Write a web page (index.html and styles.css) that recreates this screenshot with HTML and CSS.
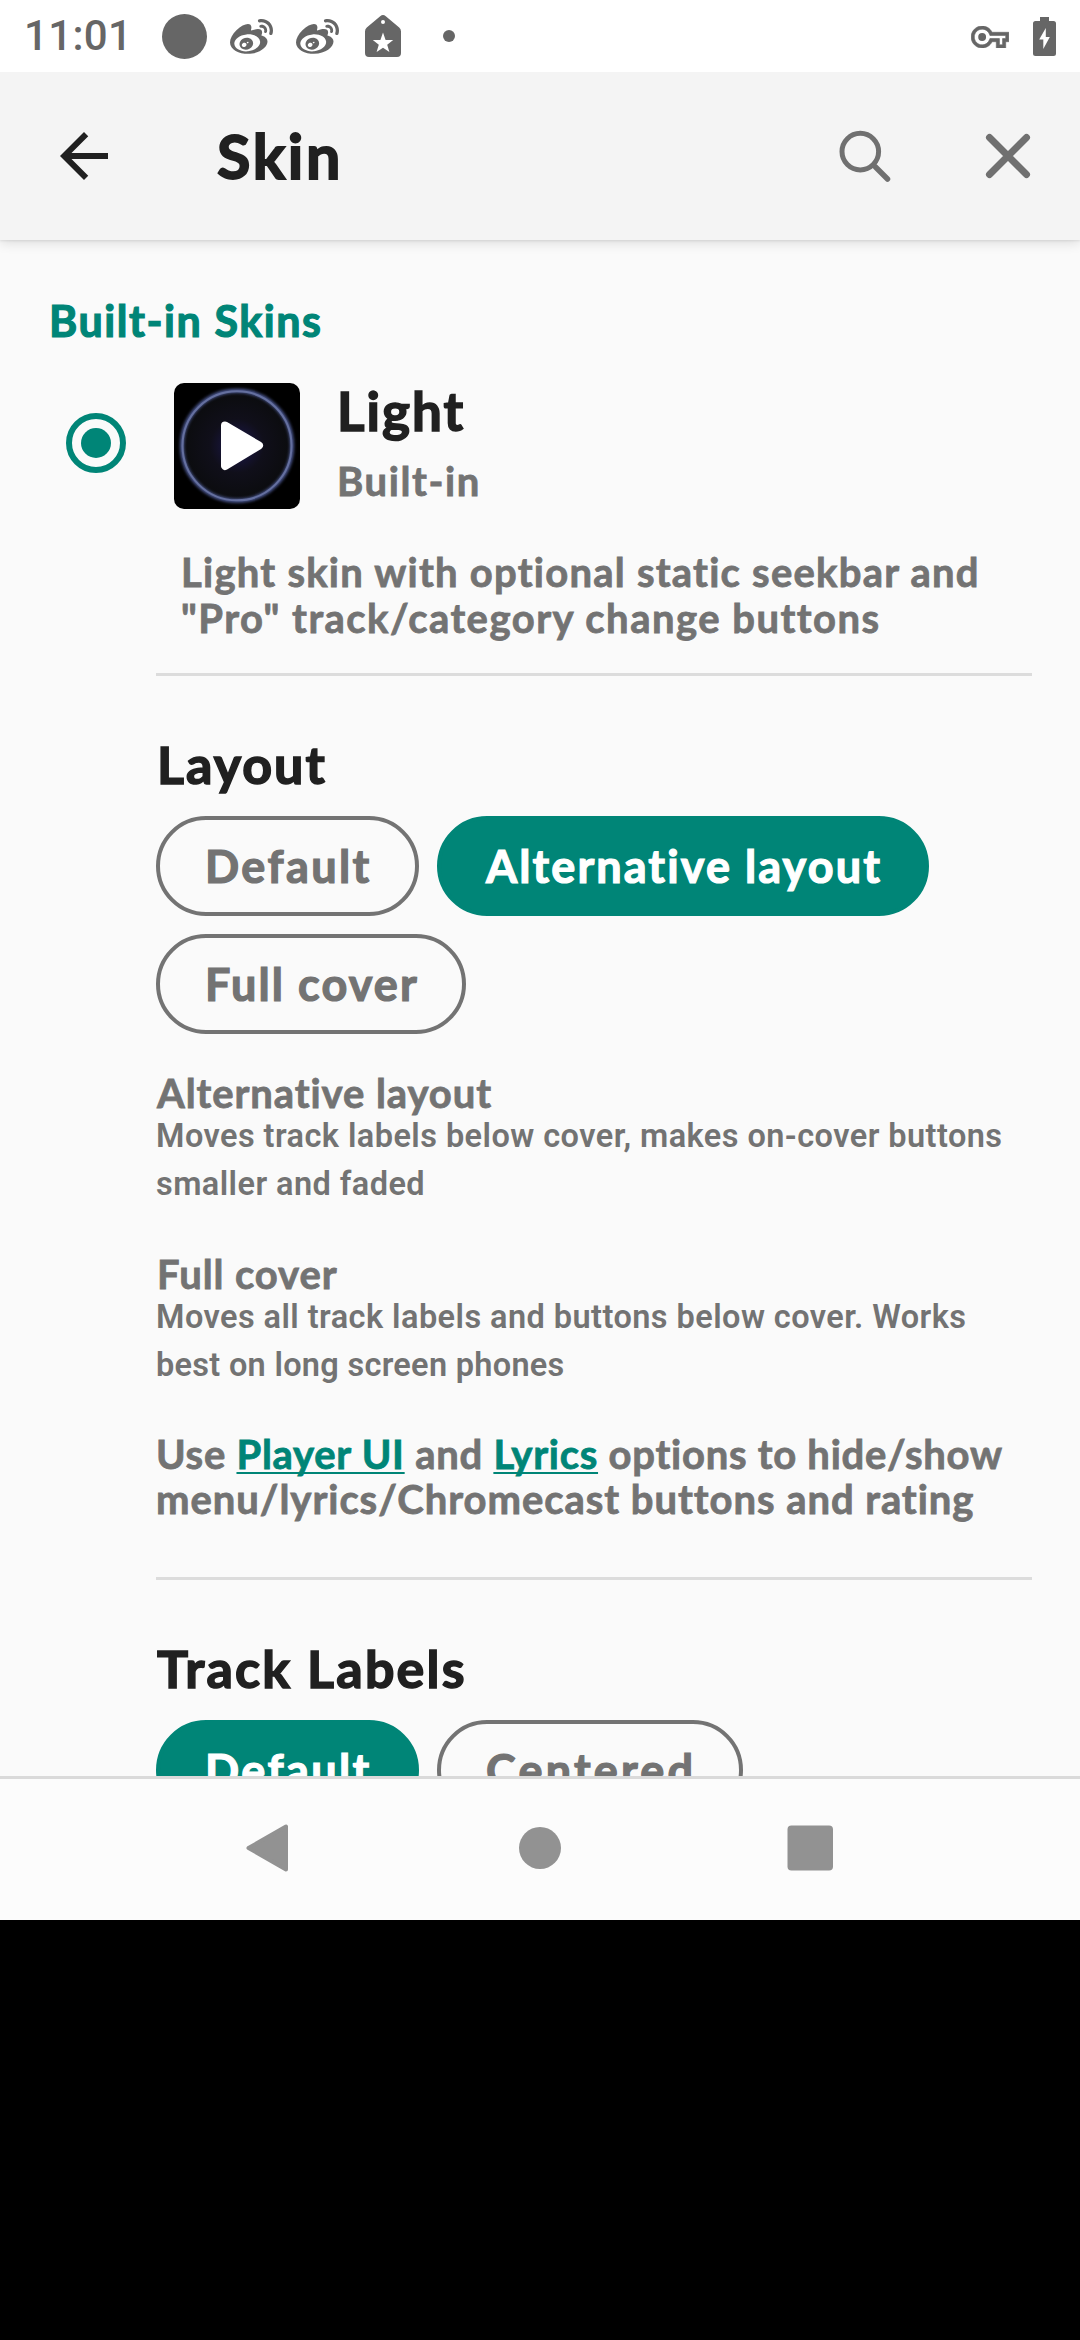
FILE: index.html
```
<!DOCTYPE html>
<html lang="en">
<head>
<meta charset="utf-8">
<title>Skin</title>
<link rel="stylesheet" href="styles.css">
</head>
<body>
<div class="status">
  <span class="clock">11:01</span>
  <svg class="disc" width="45" height="45" viewBox="0 0 45 45"><circle cx="22.5" cy="22.5" r="22.5"/></svg>
  <svg class="weibo" width="43" height="35" viewBox="0 33 512 414"><path d="M407 177.6c7.6-24-13.4-46.8-37.4-41.7-22 4.8-28.8-28.1-7.1-32.8 50.1-10.9 92.3 37.1 76.5 84.8-6.8 21.2-38.8 10.8-32-10.3zM214.8 446.7C108.5 446.7 0 395.3 0 310.4c0-44.3 28-95.4 76.3-143.7C176 67 279.5 65.8 249.9 161c-4 13.1 12.3 5.7 12.3 6 79.5-33.6 140.5-16.8 114 51.4-3.7 9.4 1.1 10.9 8.3 13.1 135.7 42.3 34.8 215.2-169.7 215.2zm143.7-146.3c-5.4-55.7-78.5-94-163.4-85.7-84.8 8.6-148.8 60.3-143.4 116s78.5 94 163.4 85.7c84.8-8.6 148.8-60.3 143.4-116zM347.9 35.1c-25.9 5.6-16.8 43.7 8.3 38.3 72.3-15.2 134.8 52.8 111.7 124-7.4 24.2 29.1 37 37.4 12 31.9-99.8-55.1-195.9-157.4-174.3zm-78.5 311c-17.1 38.8-66.8 60-109.1 46.3-40.8-13.1-58-53.4-40.3-89.7 17.7-35.4 63.1-55.4 103.4-45.1 42 10.8 63.1 50.2 46 88.5zm-86.3-30c-12.9-5.4-30 .3-38 12.9-8.3 12.9-4.3 28 8.6 34 13.1 6 30.8.3 39.1-12.9 8-13.1 3.7-28.3-9.7-34zm32.6-13.4c-5.1-1.7-11.4.6-14.3 5.4-2.9 5.1-1.4 10.6 3.7 12.9 5.1 2 11.7-.3 14.6-5.4 2.8-5.2 1.1-10.9-4-12.9z"/></svg>
  <svg class="weibo" width="43" height="35" viewBox="0 33 512 414"><path d="M407 177.6c7.6-24-13.4-46.8-37.4-41.7-22 4.8-28.8-28.1-7.1-32.8 50.1-10.9 92.3 37.1 76.5 84.8-6.8 21.2-38.8 10.8-32-10.3zM214.8 446.7C108.5 446.7 0 395.3 0 310.4c0-44.3 28-95.4 76.3-143.7C176 67 279.5 65.8 249.9 161c-4 13.1 12.3 5.7 12.3 6 79.5-33.6 140.5-16.8 114 51.4-3.7 9.4 1.1 10.9 8.3 13.1 135.7 42.3 34.8 215.2-169.7 215.2zm143.7-146.3c-5.4-55.7-78.5-94-163.4-85.7-84.8 8.6-148.8 60.3-143.4 116s78.5 94 163.4 85.7c84.8-8.6 148.8-60.3 143.4-116zM347.9 35.1c-25.9 5.6-16.8 43.7 8.3 38.3 72.3-15.2 134.8 52.8 111.7 124-7.4 24.2 29.1 37 37.4 12 31.9-99.8-55.1-195.9-157.4-174.3zm-78.5 311c-17.1 38.8-66.8 60-109.1 46.3-40.8-13.1-58-53.4-40.3-89.7 17.7-35.4 63.1-55.4 103.4-45.1 42 10.8 63.1 50.2 46 88.5zm-86.3-30c-12.9-5.4-30 .3-38 12.9-8.3 12.9-4.3 28 8.6 34 13.1 6 30.8.3 39.1-12.9 8-13.1 3.7-28.3-9.7-34zm32.6-13.4c-5.1-1.7-11.4.6-14.3 5.4-2.9 5.1-1.4 10.6 3.7 12.9 5.1 2 11.7-.3 14.6-5.4 2.8-5.2 1.1-10.9-4-12.9z"/></svg>
  <svg class="tag" width="36" height="42" viewBox="0 0 36 42"><path fill-rule="evenodd" d="M15.2 1.2Q18-1 20.8 1.2L34.2 12.6Q36 14.2 36 16.5V38Q36 42 32 42H4Q0 42 0 38V16.5Q0 14.2 1.8 12.6ZM18 5a2 2 0 1 0 0 4a2 2 0 1 0 0-4ZM18 17.5L15.4 25H7.8L13.8 29.8L11.6 37L18 32.8L24.4 37L22.2 29.8L28.2 25H20.6Z"/></svg>
  <svg class="more" width="12" height="12" viewBox="0 0 12 12"><circle cx="6" cy="6" r="6"/></svg>
  <svg class="key" width="38" height="22" viewBox="0 5 24 14"><path d="M22 19h-6v-4h-2.68c-1.14 2.42-3.6 4-6.32 4-3.86 0-7-3.14-7-7s3.14-7 7-7c2.72 0 5.17 1.58 6.32 4H24v6h-2v4zm-4-2h2v-4h2v-2H11.94l-.23-.67C11.01 8.34 9.11 7 7 7c-2.76 0-5 2.24-5 5s2.24 5 5 5c2.11 0 4.01-1.34 4.71-3.33l.23-.67H18v4z" stroke-width=".4"/><circle cx="7" cy="12" r="2"/></svg>
  <svg class="battery" width="23" height="39" viewBox="0 0 23 39"><path fill-rule="evenodd" d="M7 0h9v4h4.500q2.500 0 2.500 2.500V36.500q0 2.500-2.500 2.500H2.500Q0 39 0 36.500V6.500Q0 4 2.500 4H7ZM12.800 11L6.200 22.500H10.300V32L16.800 20H12.800Z"/></svg>
</div>

<header class="bar">
  <svg class="back" width="48" height="48" viewBox="4 4 16 16"><path d="M20 11H7.830l5.590-5.590L12 4l-8 8 8 8 1.410-1.410L7.830 13H20v-2z"/></svg>
  <h1 class="bar-title">Skin</h1>
  <svg class="search" width="54" height="54" viewBox="0 0 54 54"><circle cx="22.300" cy="22.600" r="18.300" stroke-width="5"/><path d="M37.500 38L49.500 50" stroke-width="5.500"/><path d="M36 36.500L37.500 38" stroke-width="3"/></svg>
  <svg class="close" width="48" height="48" viewBox="0 0 48 48"><path d="M5.500 5.500L42.500 42.500M42.500 5.500L5.500 42.500" stroke-width="7"/></svg>
</header>

<main class="content">
  <h2 class="group">Built-in Skins</h2>
  <div class="skin">
    <svg class="radio" width="60" height="60" viewBox="0 0 60 60"><circle cx="30" cy="30" r="27" fill="none" stroke="#008577" stroke-width="6"/><circle cx="30" cy="30" r="15" fill="#008577"/></svg>
    <svg class="cover" width="126" height="126" viewBox="0 0 126 126">
      <defs>
        <radialGradient id="glow"><stop offset="0" stop-color="#1c1850"/><stop offset=".5" stop-color="#100f1a"/><stop offset="1" stop-color="#0b0c0e"/></radialGradient>
        <filter id="soft" x="-20%" y="-20%" width="140%" height="140%"><feGaussianBlur stdDeviation="1.600"/></filter>
      </defs>
      <rect width="126" height="126" rx="10"/>
      <circle cx="63" cy="62.800" r="54" fill="url(#glow)"/>
      <circle cx="63" cy="62.800" r="55" fill="none" stroke="#4d5a94" stroke-width="4" filter="url(#soft)"/>
      <circle cx="63" cy="62.800" r="54.500" fill="none" stroke="#65709f" stroke-width="2"/>
      <path d="M51 42.500L85 62.500L51 83Z" fill="#fff" stroke="#fff" stroke-width="8" stroke-linejoin="round"/>
    </svg>
    <div class="skin-text">
      <div class="skin-name">Light</div>
      <div class="skin-kind">Built-in</div>
    </div>
  </div>
  <p class="about">Light skin with optional static seekbar and<br><span class="wider">"Pro" track/category change buttons</span></p>

  <section class="options">
    <h3 class="option-title">Layout</h3>
    <div class="pills">
      <span class="pill w-default">Default</span>
      <span class="pill w-alt on">Alternative layout</span>
      <span class="pill w-full">Full cover</span>
    </div>
    <h4 class="note-title">Alternative layout</h4>
    <p class="note">Moves track labels below cover, makes on-cover buttons<br>smaller and faded</p>
    <h4 class="note-title next">Full cover</h4>
    <p class="note">Moves all track labels and buttons below cover. Works<br><span class="tight">best on long screen phones</span></p>
    <p class="hint">Use <a class="link">Player UI</a> and <a class="link">Lyrics</a> options to hide/show<br><span class="hint-end">menu/lyrics/Chromecast buttons and rating</span></p>
  </section>

  <section class="options">
    <h3 class="option-title labels">Track Labels</h3>
    <div class="pills">
      <span class="pill w-default on">Default</span>
      <span class="pill w-centered">Centered</span>
    </div>
  </section>
</main>

<nav class="nav">
  <svg width="48" height="48" viewBox="0 0 48 48"><path d="M2.500 24L40 2.500V45.500Z" stroke="#929292" stroke-width="4" stroke-linejoin="round"/></svg>
  <svg width="48" height="48" viewBox="0 0 48 48"><circle cx="24" cy="24" r="21"/></svg>
  <svg width="48" height="48" viewBox="0 0 48 48"><rect x="1.500" y="1.500" width="45.500" height="45" rx="4"/></svg>
</nav>
</body>
</html>
```
FILE: styles.css
```
* { box-sizing: border-box; }
body {
  margin: 0;
  width: 1080px;
  height: 2340px;
  overflow: hidden;
  background: #000;
  color: #737373;
  font-family: Lato, "Liberation Sans", sans-serif;
  font-weight: 700;
  -webkit-text-stroke: .8px currentColor;
}
h1, h2, h3, h4, p { margin: 0; font-weight: 700; }
svg { display: block; flex: none; }

.status {
  display: flex;
  align-items: center;
  position: relative;
  z-index: 2;
  height: 72px;
  padding: 0 24px;
  background: #fff;
  fill: #666;
}
.clock {
  width: 138px;
  font: 500 42px/74px Roboto, sans-serif;
  letter-spacing: .35px;
  color: #666;
  -webkit-text-stroke: 0;
}
.weibo { margin-left: 22.500px; }
.weibo + .weibo { margin-left: 23px; }
.tag { margin-left: 26.500px; }
.more { margin-left: 42px; }
.key { margin: 2px 0 0 auto; stroke: #666; }
.battery { margin-left: 24px; }

.bar {
  display: flex;
  align-items: center;
  height: 168px;
  padding: 0 48px 0 60px;
  background: #f4f4f4;
  box-shadow: 0 2px 12px rgba(0, 0, 0, .14), 0 1px 2px rgba(0, 0, 0, .08);
  position: relative;
}
.back { fill: #202020; }
.bar-title {
  margin-left: 109px;
  font-size: 61px;
  line-height: 72px;
  letter-spacing: 2.600px;
  color: #202020;
  -webkit-text-stroke-width: 1.800px;
}
.search, .close { fill: none; stroke: #707070; stroke-linecap: round; }
.search { margin-left: auto; }
.close { margin-left: 92px; }

.content {
  height: 1536px;
  padding: 51px 48px 0;
  overflow: hidden;
  background: #fafafa;
}
.group {
  padding-left: 1px;
  font-size: 43px;
  line-height: 60px;
  letter-spacing: 1.550px;
  color: #008577;
  -webkit-text-stroke-width: 1.200px;
}
.skin { display: flex; margin: 32px 0 0 18px; }
.radio { margin-top: 30px; }
.cover { margin-left: 48px; }
.skin-text { margin: -2px 0 0 37px; }
.skin-name {
  font-size: 53px;
  line-height: 60px;
  letter-spacing: 2px;
  color: #202020;
  -webkit-text-stroke-width: 1.500px;
}
.skin-kind { margin-top: 15px; font-size: 40px; line-height: 50px; letter-spacing: 1.600px; }
.about {
  margin: 40px 0 0 133px;
  font-size: 40px;
  line-height: 46px;
  letter-spacing: 1.240px;
}
.wider { letter-spacing: 1.480px; }

.options { margin: 32px 0 0 108px; border-top: 3px solid #dcdcdc; }
.options + .options { margin-top: 55px; }
.option-title {
  margin-top: 58px;
  padding-left: 1px;
  font-size: 52px;
  line-height: 60px;
  letter-spacing: 2px;
  color: #202020;
  -webkit-text-stroke-width: 1.500px;
}
.labels { letter-spacing: 2.200px; }
.pills { display: flex; flex-wrap: wrap; gap: 18px; margin-top: 22px; }
.pill {
  height: 100px;
  padding-left: 45px;
  border: 4px solid #737373;
  border-radius: 50px;
  font-size: 45px;
  line-height: 92px;
  letter-spacing: 2.100px;
  white-space: nowrap;
  -webkit-text-stroke-width: 1.200px;
}
.on { border-color: #008577; background: #008577; color: #fff; }
.w-default { width: 263px; letter-spacing: 2.400px; }
.w-alt { width: 492px; }
.w-full { width: 310px; }
.w-centered { width: 306px; letter-spacing: 3.200px; }
.note-title { margin-top: 36px; font-size: 40px; line-height: 46px; letter-spacing: .920px; padding-left: 1px; }
.next { margin-top: 43px; }
.note {
  margin-top: -4px;
  font: 600 32.500px/48px Roboto, sans-serif;
  letter-spacing: .440px;
  white-space: nowrap;
  -webkit-text-stroke: 0;
}
.tight { letter-spacing: .290px; }
.hint { margin-top: 43px; font-size: 40px; line-height: 45px; letter-spacing: .740px; white-space: nowrap; }
.hint-end { letter-spacing: .960px; }
.link {
  color: #008577;
  text-decoration: underline;
  text-decoration-thickness: 2px;
  text-underline-offset: 3px;
  text-decoration-skip-ink: none;
}

.nav {
  display: flex;
  align-items: center;
  justify-content: center;
  gap: 222px;
  height: 144px;
  padding-bottom: 3px;
  border-top: 3px solid #dadada;
  background: #fcfcfc;
  fill: #929292;
}
```
